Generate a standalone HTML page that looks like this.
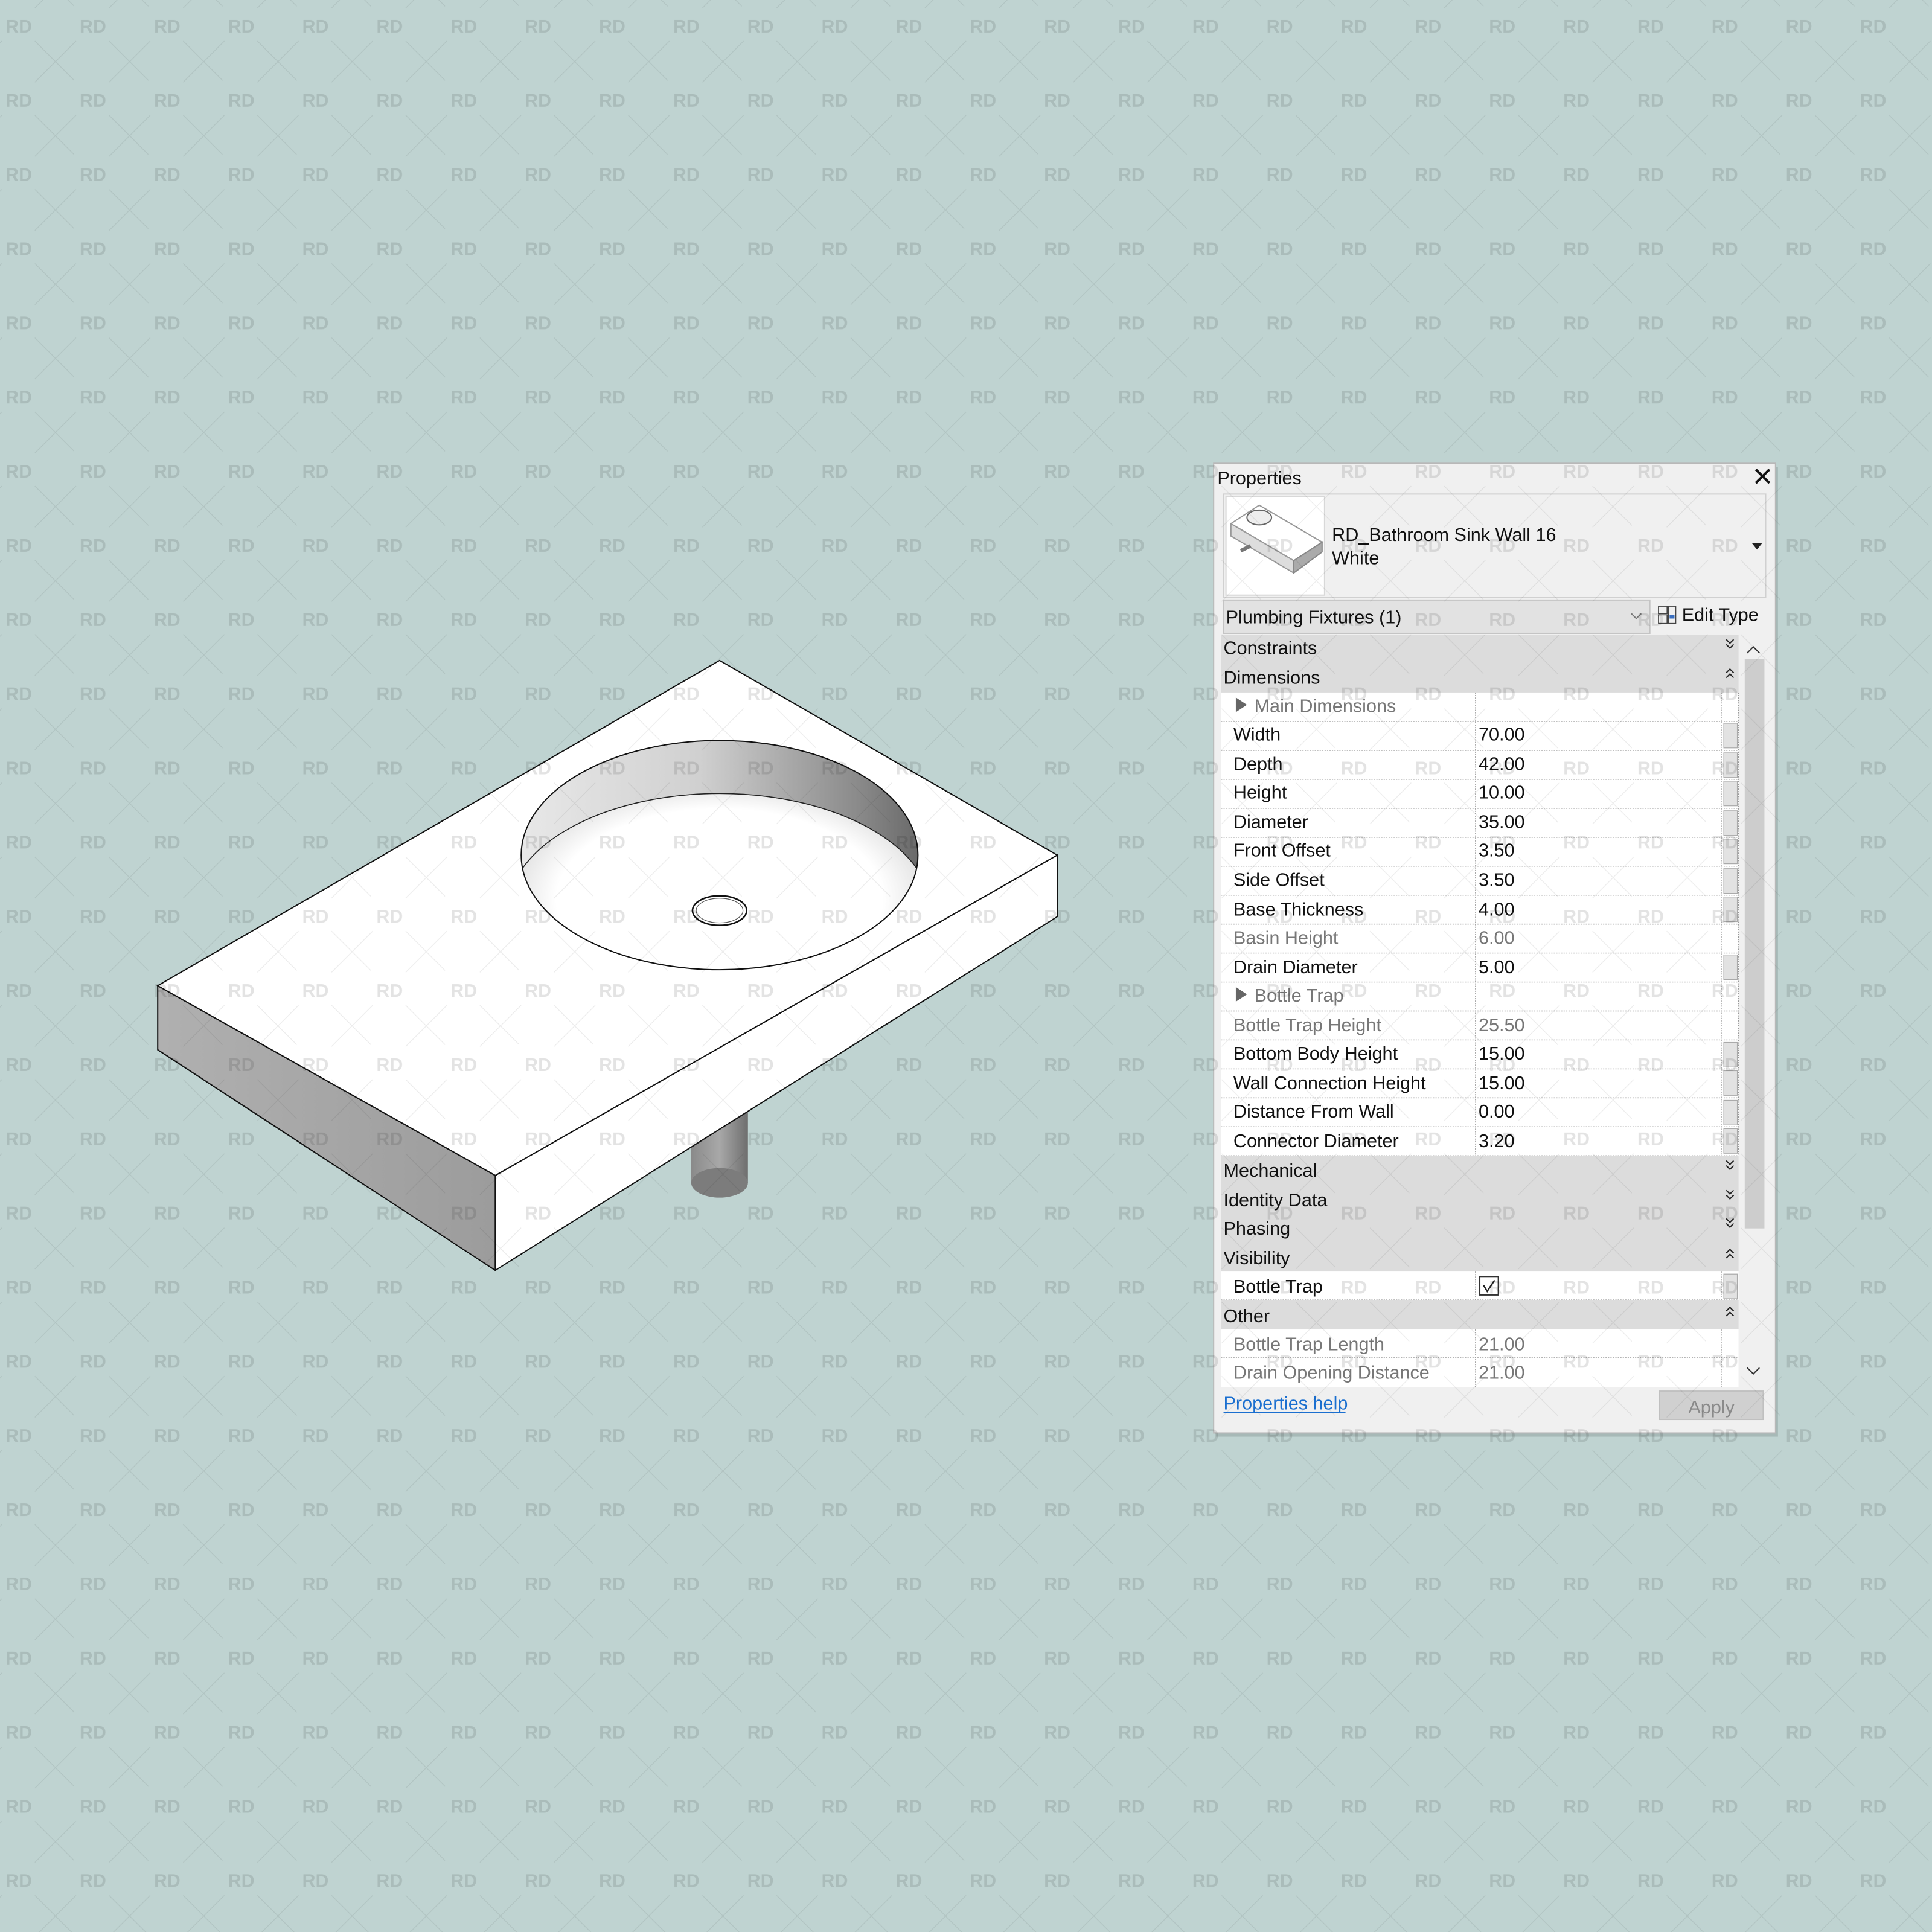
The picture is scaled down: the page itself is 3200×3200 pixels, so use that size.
<!DOCTYPE html>
<html><head><meta charset="utf-8"><style>html,body{margin:0;padding:0;background:#bfd3d1}svg{display:block}</style></head><body>
<svg width="3200" height="3200" viewBox="0 0 1568 1568" xmlns="http://www.w3.org/2000/svg" font-family="'Liberation Sans Narrow','Liberation Sans',sans-serif">
<defs>
<pattern id="wm" width="60.2" height="60.2" patternUnits="userSpaceOnUse">
<text x="4.5" y="26.5" font-family="'Liberation Sans',sans-serif" font-weight="bold" font-size="15" textLength="21.5" lengthAdjust="spacingAndGlyphs" fill="#000" fill-opacity="0.11">RD</text>
<path d="M28.3 33.3L61.7 66.7M61.7 33.3L28.3 66.7" stroke="#000" stroke-opacity="0.08" stroke-width="0.6"/>
<path d="M28.3 -26.9L61.7 6.5M61.7 -26.9L28.3 6.5" stroke="#000" stroke-opacity="0.08" stroke-width="0.6"/>
<path d="M-31.9 33.3L1.5 66.7M1.5 33.3L-31.9 66.7" stroke="#000" stroke-opacity="0.08" stroke-width="0.6"/>
</pattern>
<linearGradient id="lf" x1="0" y1="0" x2="1" y2="0"><stop offset="0" stop-color="#b0b0b0"/><stop offset="1" stop-color="#9c9c9c"/></linearGradient>
<linearGradient id="bw" x1="0" y1="0" x2="1" y2="0"><stop offset="0" stop-color="#e8e8e8"/><stop offset="0.45" stop-color="#d0d0d0"/><stop offset="0.85" stop-color="#8a8a8a"/><stop offset="1" stop-color="#6a6a6a"/></linearGradient>
<radialGradient id="bi" cx="0.5" cy="0.45" r="0.55"><stop offset="0.7" stop-color="#fff"/><stop offset="1" stop-color="#d4d4d4"/></radialGradient>
<linearGradient id="pp" x1="0" y1="0" x2="1" y2="0"><stop offset="0" stop-color="#8a8a8a"/><stop offset="0.5" stop-color="#a8a8a8"/><stop offset="1" stop-color="#6e6e6e"/></linearGradient>
<clipPath id="bc"><ellipse cx="584" cy="694" rx="161" ry="93"/></clipPath>
</defs>
<rect width="1568" height="1568" fill="#bfd3d1"/>

<!-- sink -->
<rect x="561" y="890" width="46" height="70" fill="url(#pp)"/>
<ellipse cx="584" cy="960" rx="23" ry="12" fill="#7c7c7c"/>
<polygon points="128,800 402,954 402,1031 128,852" fill="url(#lf)" stroke="#111" stroke-width="1"/>
<polygon points="402,954 858,694 858,744 402,1031" fill="#fff" stroke="#111" stroke-width="1"/>
<polygon points="128,800 584,536 858,694 402,954" fill="#fff" stroke="#111" stroke-width="1"/>
<ellipse cx="584" cy="694" rx="161" ry="93" fill="url(#bw)"/>
<g clip-path="url(#bc)"><ellipse cx="584" cy="740" rx="172" ry="96" fill="url(#bi)"/><ellipse cx="584" cy="740" rx="172" ry="96" fill="none" stroke="#222" stroke-width="0.8"/></g>
<ellipse cx="584" cy="694" rx="161" ry="93" fill="none" stroke="#111" stroke-width="1"/>
<ellipse cx="584" cy="739" rx="22" ry="12" fill="#fff" stroke="#111" stroke-width="1.3"/>
<ellipse cx="584" cy="739" rx="19" ry="10" fill="none" stroke="#555" stroke-width="0.6"/>

<!-- panel -->
<rect x="987" y="379" width="456" height="787" fill="#000" opacity="0.12"/>
<rect x="985" y="376" width="456" height="787" fill="#f0f0f0" stroke="#b8b8b8"/>
<g font-size="15" fill="#111">
<text x="988" y="393">Properties</text>
<path d="M1425 381l11 11M1436 381l-11 11" stroke="#111" stroke-width="2"/>
<rect x="993" y="401" width="440" height="84" fill="#f0f0f0" stroke="#d0d0d0"/>
<rect x="995" y="403" width="80" height="80" fill="#fff" stroke="#d8d8d8"/>
<polygon points="999,425 1022,410 1073,440 1050,455" fill="#fff" stroke="#999"/>
<polygon points="999,425 1050,455 1050,465 999,435" fill="#ddd" stroke="#999"/>
<polygon points="1050,455 1073,440 1073,448 1050,465" fill="#aaa" stroke="#888"/>
<ellipse cx="1022" cy="420" rx="10" ry="6" fill="#eee" stroke="#666"/>
<path d="M1007 447l8 -4" stroke="#777" stroke-width="3"/>
<text x="1081" y="439">RD_Bathroom Sink Wall 16</text>
<text x="1081" y="458">White</text>
<path d="M1422 441h8l-4 5z" fill="#222"/>
<rect x="993" y="487" width="346" height="27" fill="#e2e2e2" stroke="#c4c4c4"/>
<text x="995" y="506">Plumbing Fixtures (1)</text>
<path d="M1324 498l4 4 4-4" fill="none" stroke="#777"/>
<rect x="1346" y="492" width="7" height="6" fill="none" stroke="#444" stroke-width="0.8"/><rect x="1354" y="492" width="6" height="14" fill="none" stroke="#444" stroke-width="0.8"/><rect x="1346" y="499" width="7" height="7" fill="none" stroke="#444" stroke-width="0.8"/><rect x="1355" y="499" width="4" height="3" fill="#3a6fc0"/>
<text x="1365" y="504">Edit Type</text>
<path d="M1418 530l5-5 5 5" fill="none" stroke="#333"/>
<rect x="1416" y="535" width="16" height="462" fill="#cdcdcd"/>
<path d="M1418 1110l5 5 5-5" fill="none" stroke="#333"/>
<rect x="991" y="515" width="420" height="47" fill="#dcdcdc"/>
<rect x="991" y="938" width="420" height="94" fill="#dcdcdc"/>
<rect x="991" y="1055" width="420" height="24" fill="#dcdcdc"/>
<text x="993" y="531">Constraints</text>
<text x="993" y="555">Dimensions</text>
<text x="993" y="955">Mechanical</text>
<text x="993" y="979">Identity Data</text>
<text x="993" y="1002">Phasing</text>
<text x="993" y="1026">Visibility</text>
<text x="993" y="1073">Other</text>
<g>
<path d="M1401 519l3 3 3-3M1401 523l3 3 3-3" fill="none" stroke="#222" stroke-width="1"/>
<path d="M1401 550l3-3 3 3M1401 546l3-3 3 3" fill="none" stroke="#222" stroke-width="1"/>
<path d="M1401 942l3 3 3-3M1401 946l3 3 3-3" fill="none" stroke="#222" stroke-width="1"/>
<path d="M1401 966l3 3 3-3M1401 970l3 3 3-3" fill="none" stroke="#222" stroke-width="1"/>
<path d="M1401 989l3 3 3-3M1401 993l3 3 3-3" fill="none" stroke="#222" stroke-width="1"/>
<path d="M1401 1021l3-3 3 3M1401 1017l3-3 3 3" fill="none" stroke="#222" stroke-width="1"/>
<path d="M1401 1068l3-3 3 3M1401 1064l3-3 3 3" fill="none" stroke="#222" stroke-width="1"/>
</g>
<rect x="991" y="562" width="420" height="376" fill="#fff"/>
<rect x="991" y="1032" width="420" height="23" fill="#fff"/>
<rect x="991" y="1079" width="420" height="47" fill="#fff"/>
<g stroke="#999" stroke-width="0.7" stroke-dasharray="1 1">
<path d="M991 585.5H1411M991 609H1411M991 632.5H1411M991 656H1411M991 679.5H1411M991 703H1411M991 726.5H1411M991 750H1411M991 773.5H1411M991 797H1411M991 820.5H1411M991 844H1411M991 867.5H1411M991 891H1411M991 914.5H1411M991 938H1411M991 1055H1411M991 1102H1411"/>
<path d="M1197.5 562V938M1197.5 1032V1055M1197.5 1079V1126M1397.5 562V938M1397.5 1032V1055M1397.5 1079V1126M1411 562V938"/>
</g>
<g fill="#e2e2e2" stroke="#aaa" stroke-width="0.6">
<rect x="1399" y="587" width="11" height="20"/><rect x="1399" y="611" width="11" height="20"/><rect x="1399" y="634" width="11" height="20"/><rect x="1399" y="658" width="11" height="20"/><rect x="1399" y="681" width="11" height="20"/><rect x="1399" y="705" width="11" height="20"/><rect x="1399" y="728" width="11" height="20"/><rect x="1399" y="775" width="11" height="20"/><rect x="1399" y="846" width="11" height="20"/><rect x="1399" y="869" width="11" height="20"/><rect x="1399" y="893" width="11" height="20"/><rect x="1399" y="916" width="11" height="20"/><rect x="1399" y="1034" width="11" height="20"/>
</g>
<g fill="#666"><path d="M1003 566v12l9-6z"/><path d="M1003 801v12l9-6z"/></g>
<g fill="#777">
<text x="1018" y="578">Main Dimensions</text>
<text x="1018" y="813">Bottle Trap</text>
<text x="1001" y="766">Basin Height</text><text x="1200" y="766">6.00</text>
<text x="1001" y="837">Bottle Trap Height</text><text x="1200" y="837">25.50</text>
<text x="1001" y="1096">Bottle Trap Length</text><text x="1200" y="1096">21.00</text>
<text x="1001" y="1119">Drain Opening Distance</text><text x="1200" y="1119">21.00</text>
</g>
<text x="1001" y="601">Width</text><text x="1200" y="601">70.00</text>
<text x="1001" y="625">Depth</text><text x="1200" y="625">42.00</text>
<text x="1001" y="648">Height</text><text x="1200" y="648">10.00</text>
<text x="1001" y="672">Diameter</text><text x="1200" y="672">35.00</text>
<text x="1001" y="695">Front Offset</text><text x="1200" y="695">3.50</text>
<text x="1001" y="719">Side Offset</text><text x="1200" y="719">3.50</text>
<text x="1001" y="743">Base Thickness</text><text x="1200" y="743">4.00</text>
<text x="1001" y="790">Drain Diameter</text><text x="1200" y="790">5.00</text>
<text x="1001" y="860">Bottom Body Height</text><text x="1200" y="860">15.00</text>
<text x="1001" y="884">Wall Connection Height</text><text x="1200" y="884">15.00</text>
<text x="1001" y="907">Distance From Wall</text><text x="1200" y="907">0.00</text>
<text x="1001" y="931">Connector Diameter</text><text x="1200" y="931">3.20</text>
<text x="1001" y="1049">Bottle Trap</text>
<rect x="1201" y="1036" width="15" height="15" fill="#fff" stroke="#333"/>
<path d="M1204 1043l3 5 6-9" fill="none" stroke="#222" stroke-width="1.2"/>
<text x="993" y="1144" fill="#1a6fd0">Properties help</text>
<path d="M993 1146.5H1092" stroke="#1a6fd0"/>
<rect x="1347" y="1129" width="84" height="23" fill="#d0d0d0" stroke="#c0c0c0"/>
<text x="1389" y="1147" text-anchor="middle" fill="#8a8a8a">Apply</text>
</g>

<rect width="1568" height="1568" fill="url(#wm)"/>
</svg>
</body></html>
